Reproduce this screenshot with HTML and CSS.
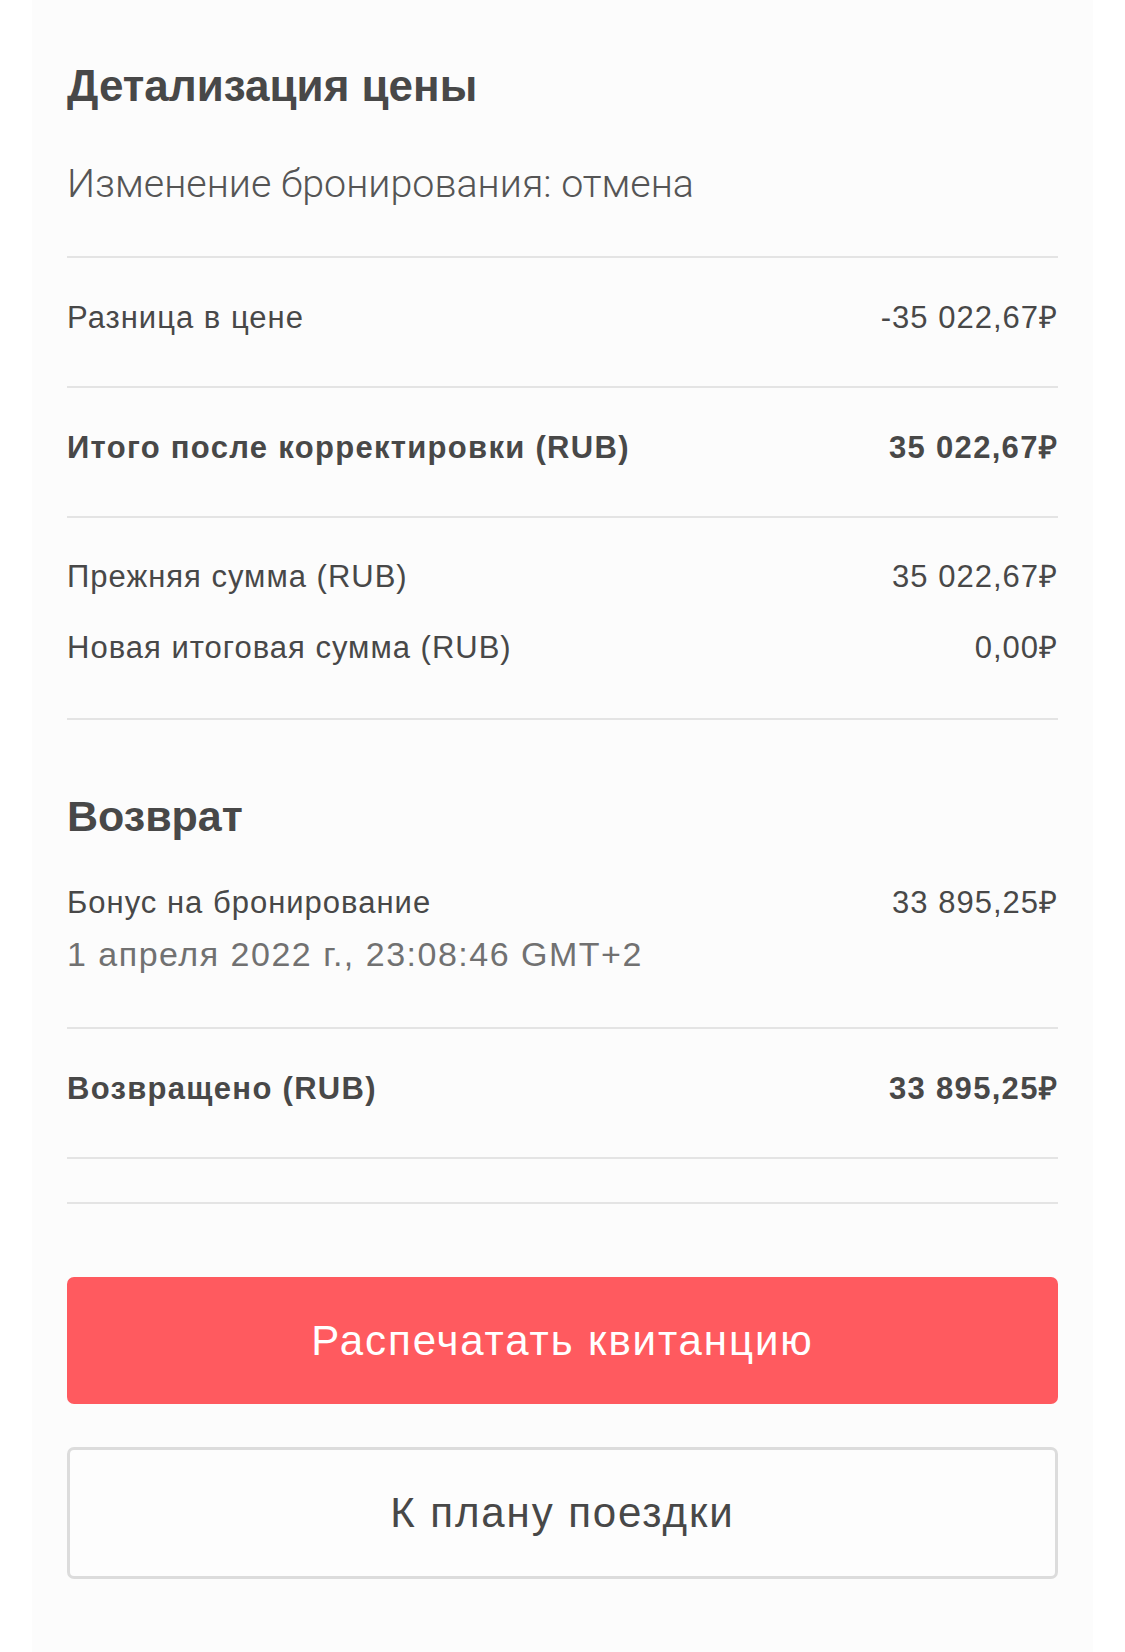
FILE: index.html
```html
<!DOCTYPE html>
<html lang="ru">
<head>
<meta charset="utf-8">
<title>Детализация цены</title>
<link rel="stylesheet" href="styles.css">
</head>
<body>
<div class="panel">
  <h1 class="title">Детализация цены</h1>
  <p class="subtitle">Изменение бронирования: отмена</p>
  <div class="divider"></div>
  <div class="row row-single">
    <span>Разница в цене</span>
    <span>-35 022,67₽</span>
  </div>
  <div class="divider"></div>
  <div class="row row-single bold">
    <span>Итого после корректировки (RUB)</span>
    <span>35 022,67₽</span>
  </div>
  <div class="divider"></div>
  <div class="group">
    <div class="row">
      <span>Прежняя сумма (RUB)</span>
      <span>35 022,67₽</span>
    </div>
    <div class="row">
      <span>Новая итоговая сумма (RUB)</span>
      <span>0,00₽</span>
    </div>
  </div>
  <div class="divider"></div>
  <h2 class="section">Возврат</h2>
  <div class="refund">
    <div class="row">
      <span>Бонус на бронирование</span>
      <span>33 895,25₽</span>
    </div>
    <div class="date">1 апреля 2022 г., 23:08:46 GMT+2</div>
  </div>
  <div class="divider"></div>
  <div class="row row-single bold">
    <span>Возвращено (RUB)</span>
    <span>33 895,25₽</span>
  </div>
  <div class="divider"></div>
  <div class="spacer"></div>
  <div class="divider"></div>
  <button class="btn btn-primary">Распечатать квитанцию</button>
  <button class="btn btn-secondary">К плану поездки</button>
</div>
</body>
</html>
```

FILE: styles.css
```css
html, body {
  margin: 0;
  padding: 0;
  background: #ffffff;
}

body {
  font-family: "Liberation Sans", Arial, sans-serif;
  color: #484848;
}

.panel {
  margin: 0 32px;
  min-height: 1652px;
  background: #fcfcfc;
  padding: 60px 35px 0;
  box-sizing: border-box;
  display: flex;
  flex-direction: column;
}

.title {
  margin: 0;
  font-size: 44px;
  line-height: 52px;
  font-weight: 700;
}

.subtitle {
  margin: 48px 0 48px;
  font-family: "Roboto", "Liberation Sans", sans-serif;
  font-weight: 300;
  font-size: 39.4px;
  line-height: 48px;
  color: #555555;
}

.divider {
  height: 2px;
  background: #e4e4e4;
}

.row {
  display: flex;
  justify-content: space-between;
  align-items: center;
  font-size: 31px;
  line-height: 36px;
  letter-spacing: 1px;
}

.row-single {
  padding: 42px 0 50px;
}

.bold {
  font-weight: 700;
  letter-spacing: 1.3px;
}

.group {
  display: flex;
  flex-direction: column;
  gap: 35px;
  padding: 41px 0 52px;
}

.section {
  margin: 70px 0 0;
  font-size: 43px;
  line-height: 52px;
  font-weight: 700;
}

.refund {
  padding: 43px 0 53px;
}

.date {
  margin-top: 13px;
  font-size: 34px;
  line-height: 40px;
  color: #717171;
  letter-spacing: 1.5px;
}

.spacer {
  height: 43px;
}

.btn {
  display: flex;
  align-items: center;
  justify-content: center;
  width: 100%;
  font-family: "Liberation Sans", Arial, sans-serif;
  font-size: 42px;
  letter-spacing: 1.9px;
  border-radius: 7px;
  box-sizing: border-box;
  cursor: pointer;
}

.btn-primary {
  margin-top: 73px;
  height: 127px;
  background: #ff5a5f;
  color: #ffffff;
  border: none;
}

.btn-secondary {
  margin-top: 43px;
  height: 132px;
  background: #fdfdfd;
  color: #484848;
  border: 3px solid #dcdcdc;
}
```
